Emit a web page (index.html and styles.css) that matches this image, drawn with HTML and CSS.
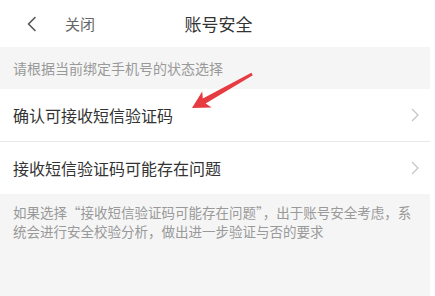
FILE: index.html
```html
<!DOCTYPE html>
<html lang="zh-CN">
<head>
<meta charset="utf-8">
<title>账号安全</title>
<link rel="stylesheet" href="styles.css">
</head>
<body>
<div class="page">
  <header class="nav">
    <div class="nav-left">
      <svg class="back" width="12" height="16" viewBox="0 0 12 16"><path d="M9 1.5 L2.5 8 L9 14.5" fill="none" stroke="#555" stroke-width="1.6" stroke-linecap="round" stroke-linejoin="round"/></svg>
      <span class="close">关闭</span>
    </div>
    <div class="nav-title">账号安全</div>
    <div class="nav-right"></div>
  </header>
  <div class="hint">请根据当前绑定手机号的状态选择</div>
  <ul class="list">
    <li class="row"><span>确认可接收短信验证码</span><svg class="chev" width="8" height="14" viewBox="0 0 8 14"><path d="M1 1 L7 7 L1 13" fill="none" stroke="#c4c4c4" stroke-width="1.2"/></svg></li>
    <li class="row"><span>接收短信验证码可能存在问题</span><svg class="chev" width="8" height="14" viewBox="0 0 8 14"><path d="M1 1 L7 7 L1 13" fill="none" stroke="#c4c4c4" stroke-width="1.2"/></svg></li>
  </ul>
  <div class="note">如果选择“接收短信验证码可能存在问题”，出于账号安全考虑，系统会进行安全校验分析，做出进一步验证与否的要求</div>
</div>
<svg class="arrow" width="435" height="296" viewBox="0 0 435 296"><polygon points="192,108 211.6,107.6 205.6,103.6 252.8,75.2 251.4,72.8 202.8,98.6 202.2,91.6" fill="#e63b40"/></svg>
</body>
</html>
```
FILE: styles.css
```css
html, body {
  margin: 0;
  padding: 0;
  background: #ffffff;
}
body {
  width: 435px;
  height: 296px;
  overflow: hidden;
  position: relative;
  font-family: "Noto Sans CJK SC", "Noto Sans", sans-serif;
}
.page {
  width: 430px;
  height: 296px;
  display: flex;
  flex-direction: column;
}
.nav {
  height: 47px;
  display: grid;
  grid-template-columns: 1fr auto 1fr;
  align-items: center;
  width: 435px;
}
.nav-left {
  display: flex;
  align-items: center;
  padding-left: 26px;
}
.back {
  display: block;
}
.close {
  margin-left: 27px;
  font-size: 15px;
  color: #666;
  line-height: 20px;
}
.nav-title {
  font-size: 17px;
  color: #333;
  padding-left: 2px;
  line-height: 24px;
}
.hint {
  height: 42px;
  background: #f5f5f5;
  color: #999;
  font-size: 14px;
  line-height: 42px;
  padding-left: 13px;
  box-sizing: border-box;
}
.list {
  list-style: none;
  margin: 0;
  padding: 0;
}
.row {
  height: 52px;
  display: flex;
  align-items: center;
  justify-content: space-between;
  padding: 0 11px 0 13px;
  font-size: 16px;
  color: #333;
}
.row + .row {
  border-top: 1px solid #e8e8e8;
}
.chev {
  display: block;
}
.note {
  flex: 1;
  background: #f5f5f5;
  color: #999;
  font-size: 13.5px;
  line-height: 18.5px;
  padding: 9px 13px 0 13px;
}
.arrow {
  position: absolute;
  left: 0;
  top: 0;
  pointer-events: none;
}
```
